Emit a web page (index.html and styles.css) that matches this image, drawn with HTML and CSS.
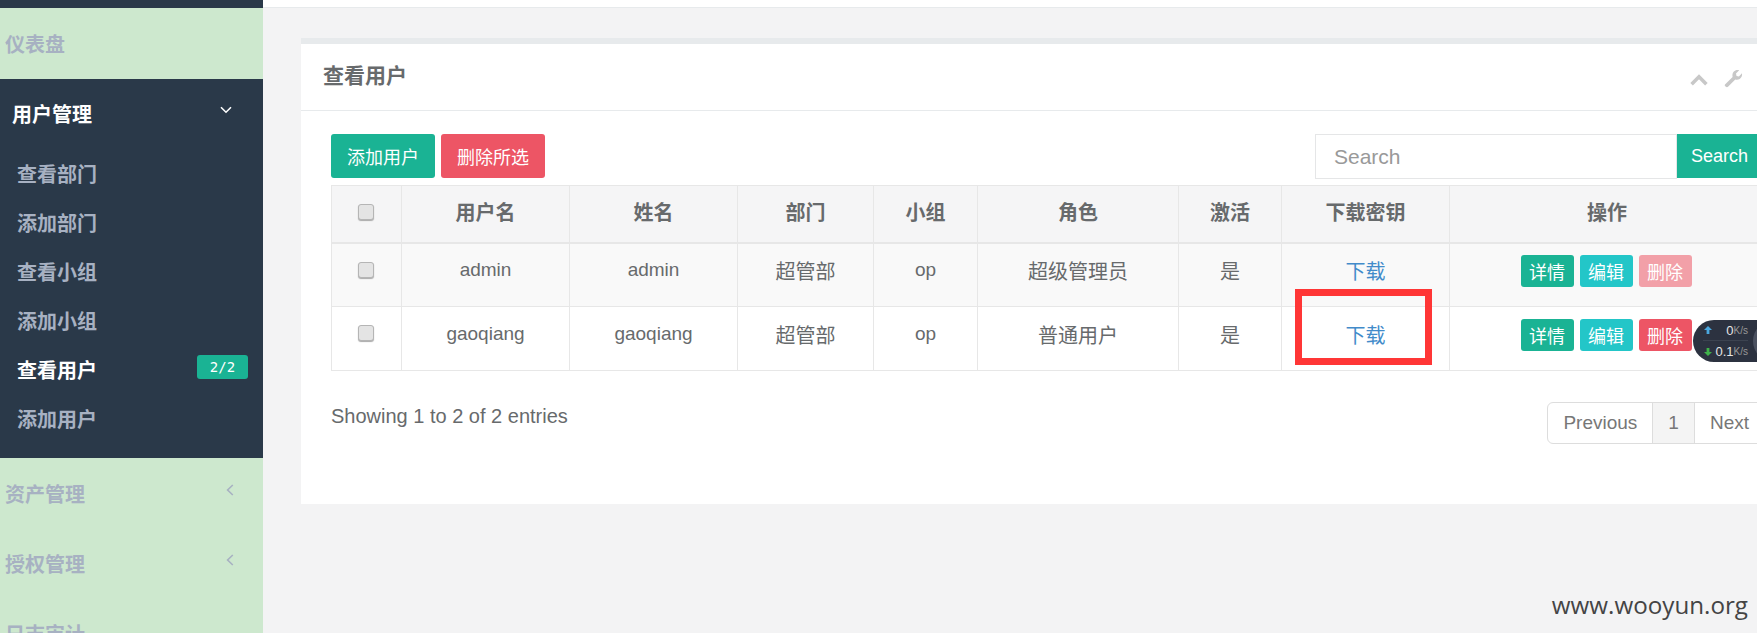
FILE: index.html
```html
<!DOCTYPE html>
<html lang="zh-CN">
<head>
<meta charset="utf-8">
<title>查看用户</title>
<link rel="stylesheet" href="styles.css">
</head>
<body>
<div class="page">
  <aside class="sidebar">
    <div class="side-top"></div>
    <div class="nav-item nav-dash"><span>仪表盘</span></div>
    <div class="nav-open">
      <div class="nav-head"><span>用户管理</span>
        <svg class="chev-down" width="12" height="8" viewBox="0 0 12 8"><path d="M1 1.2l5 5 5-5" fill="none" stroke="#fff" stroke-width="1.6"/></svg>
      </div>
      <ul class="sub">
        <li>查看部门</li>
        <li>添加部门</li>
        <li>查看小组</li>
        <li>添加小组</li>
        <li class="active">查看用户<span class="badge">2/2</span></li>
        <li>添加用户</li>
      </ul>
    </div>
    <div class="nav-item nav-closed"><span>资产管理</span>
      <svg width="8" height="12" viewBox="0 0 8 12"><path d="M6.8 1L1.600 6l5.200 5" fill="none" stroke="#a7b1c2" stroke-width="1.6"/></svg>
    </div>
    <div class="nav-item nav-closed"><span>授权管理</span>
      <svg width="8" height="12" viewBox="0 0 8 12"><path d="M6.8 1L1.600 6l5.200 5" fill="none" stroke="#a7b1c2" stroke-width="1.6"/></svg>
    </div>
    <div class="nav-item nav-closed"><span>日志审计</span></div>
  </aside>
  <main class="main">
    <div class="topbar"></div>
    <section class="card">
      <header class="card-title">
        <h5>查看用户</h5>
        <div class="tools">
          <svg class="tool-up" width="18" height="12" viewBox="0 0 18 12"><path d="M1.600 10.200L9 2.800l7.400 7.400" fill="none" stroke="#c8c8c8" stroke-width="3.600"/></svg>
          <svg width="20" height="20" viewBox="0 0 20 20"><path d="M2 16.500L9.600 8.900C8.900 6.200 10 3.600 12.400 2.500c1.300-.6 2.700-.6 3.800-.2L13 5.500l.5 2.400 2.400.5 3.100-3.100c.4 2.300-.4 4.400-2.300 5.600-1.500.9-3 1-4.400.5L5 18.800c-.6.6-1.500.6-2.100 0l-.9-.9c-.4-.4-.4-1 0-1.400z" fill="#c8c8c8"/></svg>
        </div>
      </header>
      <div class="card-body">
        <div class="toolbar">
          <div class="actions">
            <button class="btn btn-green">添加用户</button>
            <button class="btn btn-red">删除所选</button>
          </div>
          <div class="search">
            <input class="search-input" type="text" placeholder="Search">
            <button class="search-btn">Search</button>
          </div>
        </div>
        <table class="users">
          <colgroup>
            <col class="c1"><col class="c2"><col class="c3"><col class="c4"><col class="c5"><col class="c6"><col class="c7"><col class="c8"><col>
          </colgroup>
          <thead>
            <tr>
              <th><span class="check"></span></th>
              <th>用户名</th><th>姓名</th><th>部门</th><th>小组</th><th>角色</th><th>激活</th><th>下载密钥</th><th>操作</th>
            </tr>
          </thead>
          <tbody>
            <tr class="odd">
              <td><span class="check"></span></td>
              <td>admin</td><td>admin</td><td class="zh">超管部</td><td>op</td><td class="zh">超级管理员</td><td class="zh">是</td>
              <td class="zh"><a class="dl">下载</a></td>
              <td><div class="ops"><button class="mini m-green">详情</button><button class="mini m-cyan">编辑</button><button class="mini m-red off">删除</button></div></td>
            </tr>
            <tr>
              <td><span class="check"></span></td>
              <td>gaoqiang</td><td>gaoqiang</td><td class="zh">超管部</td><td>op</td><td class="zh">普通用户</td><td class="zh">是</td>
              <td class="zh"><a class="dl">下载</a></td>
              <td><div class="ops"><button class="mini m-green">详情</button><button class="mini m-cyan">编辑</button><button class="mini m-red">删除</button></div></td>
            </tr>
          </tbody>
        </table>
        <div class="foot">
          <div class="info">Showing 1 to 2 of 2 entries</div>
          <div class="pager"><span>Previous</span><span class="cur">1</span><span>Next</span></div>
        </div>
      </div>
    </section>
  </main>
</div>
<div class="redbox"></div>
<div class="speed">
  <div class="speed-row"><svg width="10" height="10" viewBox="0 0 10 10"><path d="M5 1L1 5h2.600v4h2.800V5H9z" fill="#4aa8e0"/></svg><b>0</b><i>K/s</i></div>
  <div class="speed-row"><svg width="10" height="10" viewBox="0 0 10 10"><path d="M5 9L1 5h2.600V1h2.800v4H9z" fill="#3fb24a"/></svg><b>0.1</b><i>K/s</i></div>
  <div class="speed-ball"></div>
</div>
<div class="mark">www.wooyun.org</div>
</body>
</html>
```
FILE: styles.css
```css
* { box-sizing: border-box; }
html, body { margin: 0; height: 100%; overflow: hidden; }
body {
  font-family: "Open Sans", "Liberation Sans", "Noto Sans CJK SC", sans-serif;
  font-size: 20px;
  color: #676a6c;
  background: #f3f3f4;
}
.page { display: flex; width: 1795px; height: 633px; }
.sidebar { width: 263px; height: 633px; overflow: hidden; flex: none; background: #cde8ce; color: #a7b1c2; font-weight: 700; }
.side-top { height: 8px; background: #2a3949; }
.nav-item { display: flex; justify-content: space-between; align-items: center; padding: 0 29px 0 5px; }
.nav-dash { height: 71px; }
.nav-closed { height: 70px; }
.nav-closed svg { margin-top: -6px; }
.nav-open { background: #2a3949; height: 379px; }
.nav-head { display: flex; justify-content: space-between; align-items: center; color: #fff; padding: 4px 31px 0 12px; height: 64px; }
.chev-down { margin-top: -7px; }
.sub { list-style: none; margin: 0; padding: 6px 15px 0 17px; }
.sub li { height: 49px; display: flex; align-items: center; justify-content: space-between; color: #a7b1c2; }
.sub li.active { color: #fff; }
.badge {
  width: 51px; height: 24px; margin-top: -5px; border-radius: 3px; background: #1ab394; color: #fff;
  font: 400 14px/24px "DejaVu Sans Mono", monospace; text-align: center;
}
.main { flex: 1; }
.topbar { height: 8px; background: #fff; border-bottom: 1px solid #e7eaec; }
.card { margin: 30px 0 0 38px; background: #fff; border-top: 6px solid #e7eaec; height: 466px; }
.card-title { height: 67px; border-bottom: 1px solid #e7eaec; display: flex; justify-content: space-between; align-items: center; padding: 0 52px 0 22px; }
.card-title h5 { margin: 0 0 7px; font-size: 21px; font-weight: 700; color: #676a6c; }
.tools { display: flex; align-items: center; gap: 15px; margin-top: 2px; }
.tool-up { margin-top: 4px; }
.card-body { padding: 23px 30px 0; }
.toolbar { display: flex; justify-content: space-between; height: 51px; }
.actions { display: flex; gap: 6px; }
.btn { width: 104px; height: 44px; border: 0; border-radius: 3px; color: #fff; font: inherit; font-size: 18px; padding: 0; }
.btn-green { background: #1ab394; }
.btn-red { background: #ed5565; }
.search { display: flex; align-items: flex-start; height: 44px; }
.search-input { width: 362px; height: 45px; border: 1px solid #e5e6e7; padding: 0 18px; font: 21px "Liberation Sans", sans-serif; outline: 0; }
.search-input::placeholder { color: #999; opacity: 1; }
.search-btn { width: 88px; height: 44px; border: 0; background: #1ab394; color: #fff; font: 18px/44px "Liberation Sans", sans-serif; text-align: left; padding: 0 0 0 14px; }
.users { width: 1434px; border-collapse: collapse; table-layout: fixed; text-align: center; }
.c1 { width: 70px; } .c2 { width: 168px; } .c3 { width: 168px; } .c4 { width: 136px; }
.c5 { width: 104px; } .c6 { width: 201px; } .c7 { width: 103px; } .c8 { width: 168px; }
.users th, .users td { border: 1px solid #e7e7e7; padding: 0; vertical-align: middle; }
.users th { height: 57px; background: #f5f5f6; font-size: 20px; font-weight: 700; border-bottom-width: 2px; padding-bottom: 4px; }
.users td { height: 64px; padding-bottom: 9px; font-family: "Liberation Sans", "Noto Sans CJK SC", sans-serif; font-size: 19px; }
.users td.zh { font-family: "Noto Sans CJK SC", sans-serif; font-size: 20px; }
.users tr.odd td { background: #f9f9f9; }
.check {
  display: inline-block; width: 16px; height: 16px; vertical-align: middle; margin: -3px 2px 0 0;
  border: 1px solid #b5b5b5; border-radius: 3px; background: #e4e4e4; box-shadow: 0 1px 1px #aaa;
}
.dl { color: #428bca; }
.ops { display: flex; justify-content: center; gap: 6px; padding: 2px 2px 0 0; }
.mini { width: 53px; height: 32px; border: 0; border-radius: 3px; color: #fff; font: 400 18px/32px "Noto Sans CJK SC", sans-serif; padding: 0; }
.m-green { background: #1ab394; }
.m-cyan { background: #23c6c8; }
.m-red { background: #ed5565; }
.m-red.off { background: #f2a0a8; }
.foot { display: flex; justify-content: space-between; margin-top: 31px; }
.info { font: 20px/27px "Liberation Sans", sans-serif; margin-top: 1px; }
.pager { display: flex; height: 42px; border: 1px solid #ddd; border-radius: 6px; font: 19px/40px "Liberation Sans", sans-serif; color: #777; }
.pager span { padding: 0 15px; border-left: 1px solid #ddd; }
.pager span:first-child { border-left: 0; }
.pager .cur { background: #f4f4f4; }
.redbox { position: absolute; left: 1295px; top: 289px; width: 137px; height: 76px; border: 7px solid #ff3636; }
.speed {
  position: absolute; left: 1693px; top: 320px; width: 100px; height: 42px; border-radius: 21px;
  background: #2c3240; color: #e6e6e6; padding-left: 10px;
}
.speed-row { display: flex; align-items: center; height: 21px; width: 45px; }
.speed-row:first-child { border-bottom: 1px solid #3c4350; }
.speed-row b { margin-left: auto; font: 400 13px "Liberation Sans", sans-serif; }
.speed-row i { font: 400 10px "Liberation Sans", sans-serif; color: #999; }
.speed-ball { position: absolute; left: 60px; top: 0; width: 42px; height: 42px; border-radius: 50%; background: #4b5160; }
.mark { position: absolute; right: 9px; bottom: 12px; font: 24.2px "Open Sans", sans-serif; color: #444; }
```
